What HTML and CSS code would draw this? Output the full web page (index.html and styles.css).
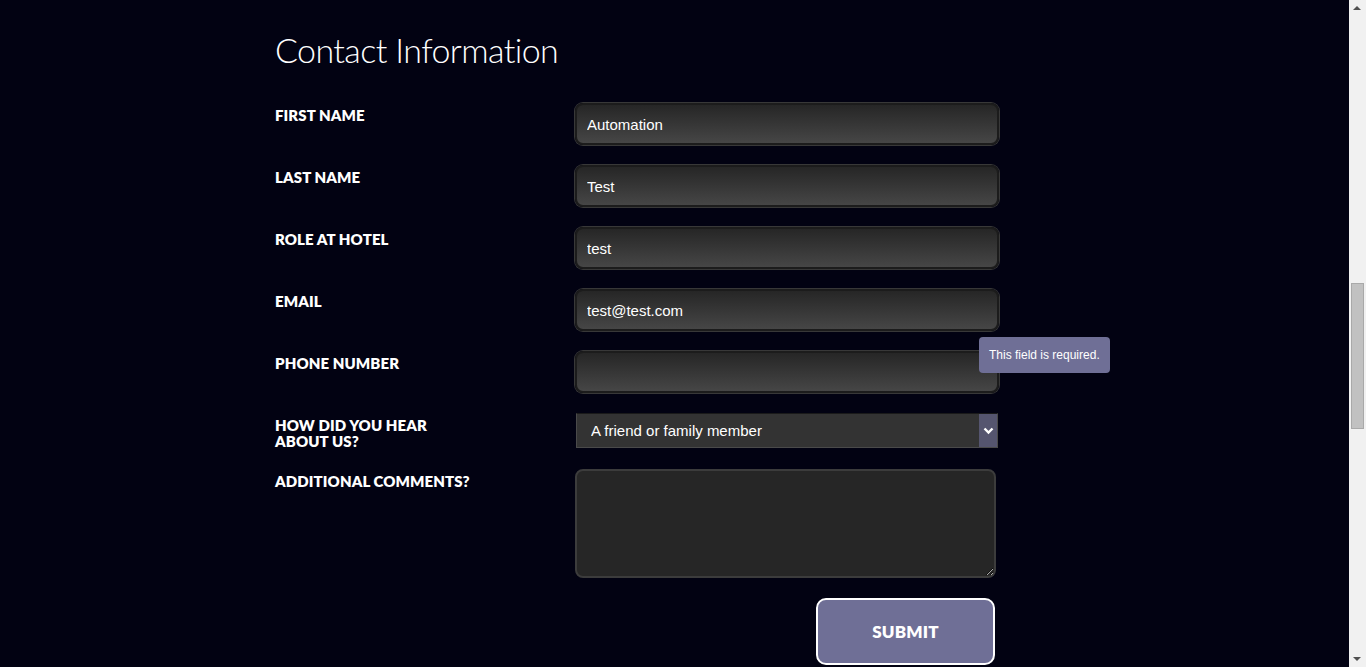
FILE: index.html
```
<!DOCTYPE html>
<html lang="en">
<head>
<meta charset="utf-8">
<title>Contact Information</title>
<link rel="stylesheet" href="styles.css">
</head>
<body>
<section class="contact">
  <h2 class="contact-title">Contact Information</h2>
  <form class="contact-form" onsubmit="return false">
    <div class="row">
      <label class="label" for="fn"><span class="label-text">First Name</span></label>
      <div class="field"><input class="input" id="fn" type="text" value="Automation"></div>
    </div>
    <div class="row">
      <label class="label" for="ln"><span class="label-text">Last Name</span></label>
      <div class="field"><input class="input" id="ln" type="text" value="Test"></div>
    </div>
    <div class="row">
      <label class="label" for="role"><span class="label-text">Role at Hotel</span></label>
      <div class="field"><input class="input" id="role" type="text" value="test"></div>
    </div>
    <div class="row">
      <label class="label" for="em"><span class="label-text">Email</span></label>
      <div class="field"><input class="input" id="em" type="text" value="test@test.com"></div>
    </div>
    <div class="row">
      <label class="label" for="ph"><span class="label-text">Phone Number</span></label>
      <div class="field">
        <input class="input" id="ph" type="text" value="">
        <div class="tooltip">This field is required.</div>
      </div>
    </div>
    <div class="row">
      <label class="label" for="hear"><span class="label-text">How did you hear about us?</span></label>
      <div class="field">
        <div class="select-wrap">
          <select class="select" id="hear">
            <option>A friend or family member</option>
          </select>
          <span class="select-arrow"><svg width="11" height="8" viewBox="0 0 11 8"><path d="M1.5 1.5 L5.5 5.5 L9.5 1.5" fill="none" stroke="#fff" stroke-width="2.4"/></svg></span>
        </div>
      </div>
    </div>
    <div class="row">
      <label class="label" for="cm"><span class="label-text">Additional Comments?</span></label>
      <div class="field"><textarea class="textarea" id="cm"></textarea></div>
    </div>
    <div class="row row-submit">
      <button class="submit" type="submit">SUBMIT</button>
    </div>
  </form>
</section>
<div class="scrollbar" aria-hidden="true">
  <span class="scroll-arrow scroll-up"></span>
  <div class="scroll-track"><span class="scroll-thumb"></span></div>
  <span class="scroll-arrow scroll-down"></span>
</div>
</body>
</html>
```
FILE: styles.css
```
html, body {
  margin: 0;
  padding: 0;
  background: #020212;
  color: #fff;
  font-family: "Lato", "Liberation Sans", sans-serif;
}
body {
  overflow: hidden;
  height: 667px;
}
.contact {
  width: 724px;
  margin-left: 275px;
}
.contact-title {
  margin: 0;
  padding-top: 26px;
  font-size: 34px;
  line-height: 48px;
  font-weight: 300;
  letter-spacing: -0.6px;
  color: #fff;
}
.contact-form {
  margin-top: 29px;
  display: flex;
  flex-direction: column;
  gap: 20px;
}
.row {
  display: flex;
}
.label {
  width: 300px;
  flex: none;
  padding-top: 4px;
  font-size: 15px;
  line-height: 16px;
  font-weight: 800;
  text-transform: uppercase;
  letter-spacing: 0.1px;
}
.label-text {
  display: block;
  max-width: 200px;
}
.field {
  position: relative;
  flex: 1;
}
.input {
  display: block;
  width: 424px;
  height: 42px;
  box-sizing: border-box;
  border: 2px solid #1c1c1c;
  border-radius: 8px;
  background: linear-gradient(#262626, #464646);
  box-shadow: 0 0 0 1px #383838;
  color: #fff;
  font-family: "Liberation Sans", Arial, sans-serif;
  font-size: 15px;
  padding: 0 10px;
  outline: none;
}
.tooltip {
  position: absolute;
  left: 404px;
  top: -14px;
  padding: 0 10px;
  height: 36px;
  line-height: 36px;
  background: #6f6f96;
  border-radius: 4px;
  color: #fff;
  font-family: "Liberation Sans", Arial, sans-serif;
  font-size: 12px;
  white-space: nowrap;
}
.select-wrap {
  position: relative;
  width: 422px;
  margin-left: 1px;
}
.select {
  display: block;
  width: 422px;
  height: 35px;
  box-sizing: border-box;
  border: 1px solid #4a4a4a;
  border-top-color: #1a1a1a;
  background: #333;
  color: #fff;
  font-family: "Liberation Sans", Arial, sans-serif;
  font-size: 15px;
  padding: 0 0 0 14px;
  appearance: none;
  -webkit-appearance: none;
  border-radius: 0;
  outline: none;
}
.select-arrow {
  position: absolute;
  right: 1px;
  top: 1px;
  bottom: 1px;
  width: 18px;
  background: #55556f;
  display: flex;
  align-items: center;
  justify-content: center;
  pointer-events: none;
}
.textarea {
  display: block;
  width: 421px;
  height: 109px;
  box-sizing: border-box;
  border: 2px solid #3c3c3c;
  border-radius: 8px;
  background: #262626;
  color: #fff;
  outline: none;
  resize: both;
}
.row-submit {
  padding-left: 541px;
}
.submit {
  width: 179px;
  height: 67px;
  box-sizing: border-box;
  background: #6f6f96;
  border: 2px solid #fff;
  border-radius: 10px;
  color: #fff;
  font-family: "Lato", "Liberation Sans", sans-serif;
  font-size: 17px;
  font-weight: 800;
  letter-spacing: 0.2px;
  cursor: pointer;
}
.scrollbar {
  position: fixed;
  top: 0;
  right: 0;
  bottom: 0;
  width: 17px;
  background: #f1f1f1;
  display: flex;
  flex-direction: column;
}
.scroll-arrow {
  height: 17px;
  flex: none;
  position: relative;
}
.scroll-arrow::after {
  content: "";
  position: absolute;
  left: 4px;
  border-left: 4px solid transparent;
  border-right: 4px solid transparent;
}
.scroll-up::after {
  top: 6px;
  border-bottom: 4px solid #505050;
}
.scroll-down::after {
  top: 7px;
  border-top: 4px solid #505050;
}
.scroll-track {
  flex: 1;
  padding-top: 266px;
}
.scroll-thumb {
  display: block;
  margin: 0 2px;
  height: 146px;
  box-sizing: border-box;
  background: #c1c1c1;
  border: 1px solid #a9a9a9;
}
```
